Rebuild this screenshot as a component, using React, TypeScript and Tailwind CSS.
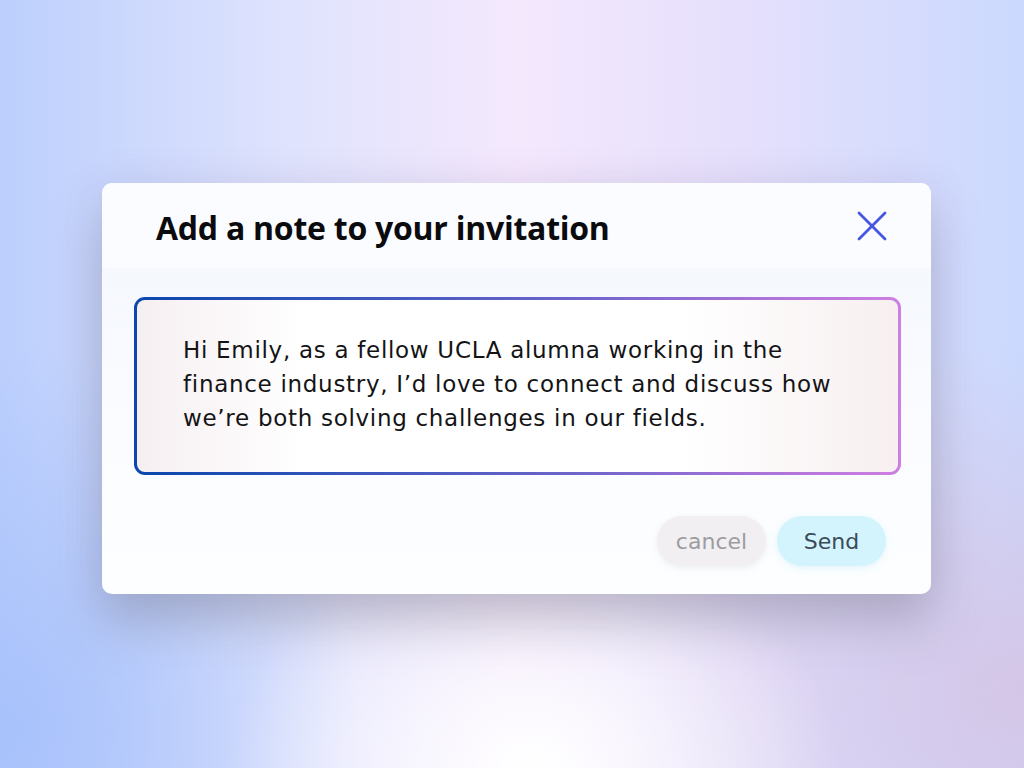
import React from "react";

export default function App() {
  return (
    <div className="min-h-screen w-full flex items-center justify-center pl-[9px] pt-[9px] bg-[radial-gradient(ellipse_30%_30%_at_52%_100%,rgba(255,255,255,1),rgba(255,255,255,0)_100%),radial-gradient(ellipse_40%_45%_at_100%_90%,rgba(214,196,228,0.9),rgba(214,196,228,0)_100%),radial-gradient(ellipse_35%_50%_at_0%_95%,rgba(165,192,251,0.9),rgba(165,192,251,0)_100%),linear-gradient(90deg,#bccffd_0%,#dfe3fd_28%,#f4e8fd_50%,#e6e0fc_72%,#cad9fe_100%)]">
      <div className="w-[829px] h-[411px] rounded-[10px] overflow-hidden flex flex-col bg-[linear-gradient(180deg,#f3f6fd_0%,#fafcff_60%,#fcfeff_100%)] shadow-[0_30px_50px_rgba(110,110,125,0.35),0_0_40px_rgba(130,110,160,0.12)]">
        <div className="h-[85px] shrink-0 flex items-center justify-between pl-[54px] pr-[45px] bg-[#fafcff]">
          <h1 className="font-['Open_Sans',sans-serif] text-[32px] font-bold text-[#0b0b0d] tracking-[-0.25px] pt-[4px]">
            Add a note to your invitation
          </h1>
          <button className="w-[30px] h-[30px] flex items-center justify-center -mr-[1px]">
            <svg width="30" height="30" viewBox="0 0 30 30" fill="none">
              <path d="M2 2L28 28M28 2L2 28" stroke="#4756e0" strokeWidth="2.8" strokeLinecap="round" />
            </svg>
          </button>
        </div>
        <div className="flex-1 flex flex-col pl-[32px] pr-[30px] pt-[29px] pb-[28px] font-['DejaVu_Sans',sans-serif]">
          <div className="h-[178px] rounded-[11px] p-[3px] bg-[linear-gradient(90deg,#0a47ae_0%,#3c57bd_30%,#7366cc_60%,#b275da_85%,#cd7fe2_100%)]">
            <div className="h-full rounded-[8px] pl-[46px] pr-[20px] pt-[33px] bg-[linear-gradient(90deg,#f6eff1_0%,#ffffff_22%,#ffffff_72%,#f7eff0_100%)]">
              <p className="text-[23px] leading-[34px] text-[#141416] tracking-[0.7px] whitespace-nowrap">
                Hi Emily, as a fellow UCLA alumna working in the
                <br />
                finance industry, I’d love to connect and discuss how
                <br />
                we’re both solving challenges in our fields.
              </p>
            </div>
          </div>
          <div className="mt-auto flex justify-end gap-[11px] pr-[15px]">
            <button className="w-[109px] h-[50px] rounded-full bg-[#f1eff2] text-[22px] text-[#9c9ca1] shadow-[0_2px_6px_rgba(200,195,205,0.25)]">
              cancel
            </button>
            <button className="w-[109px] h-[50px] rounded-full bg-[#d3f4fd] text-[22px] text-[#3a4b59] shadow-[0_2px_6px_rgba(170,225,245,0.3)]">
              Send
            </button>
          </div>
        </div>
      </div>
    </div>
  );
}
